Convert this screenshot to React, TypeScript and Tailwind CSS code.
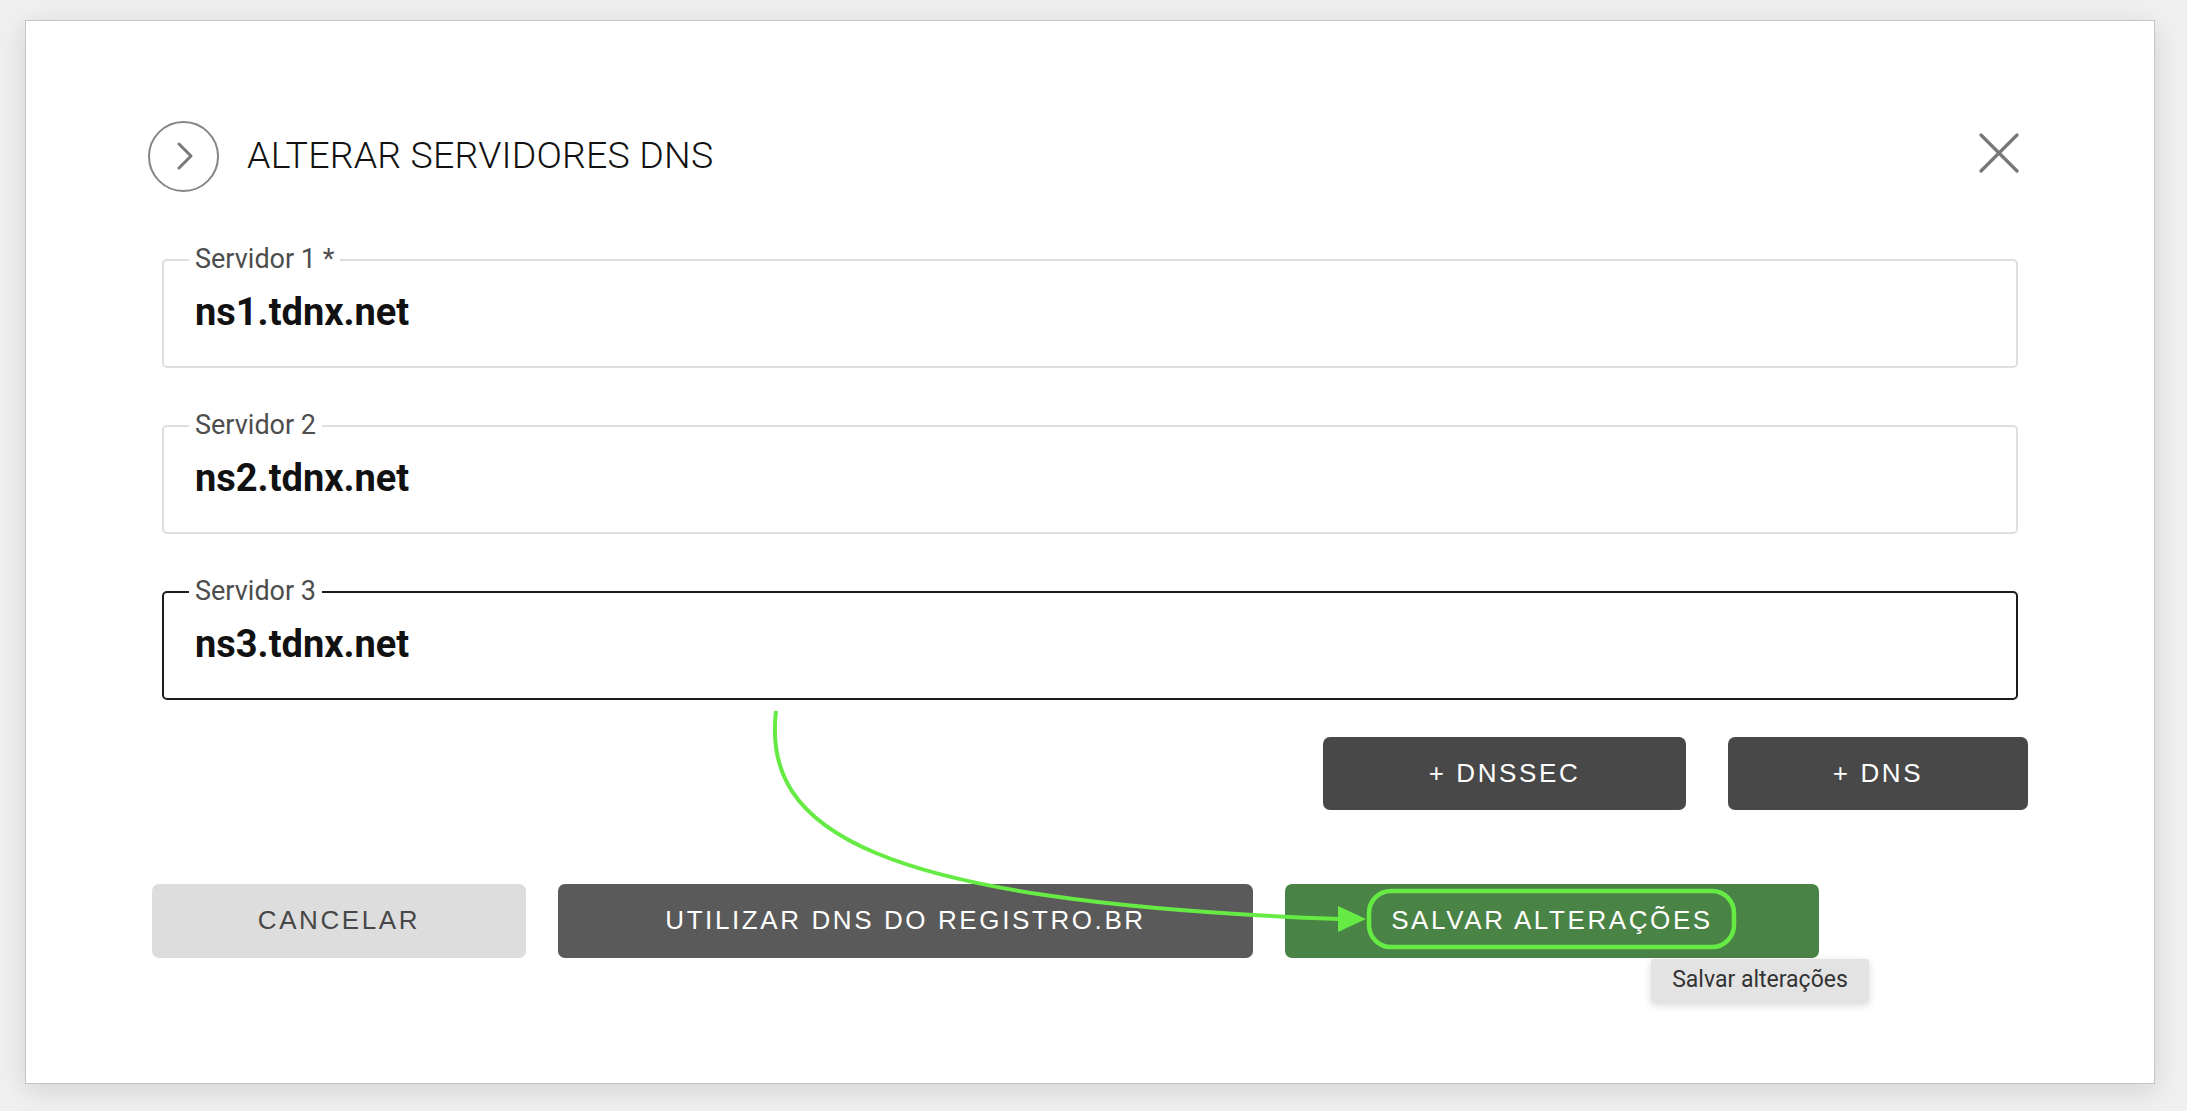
import React from "react";

const ui = { fontFamily: "Roboto, 'Noto Sans', sans-serif" };
const btn = { fontFamily: "'Liberation Sans', Arial, sans-serif" };

interface ServerFieldProps {
  label: string;
  value: string;
  focused?: boolean;
}

function ServerField({ label, value, focused = false }: ServerFieldProps) {
  return (
    <div
      className={
        "relative mx-[10px] h-[109px] rounded-[5px] bg-white flex items-center pl-[31px] " +
        (focused ? "border-2 border-[#1c1c1c]" : "border-2 border-[#dedede]")
      }
    >
      <span className="absolute -top-[16px] left-[25px] bg-white px-[6px] text-[27px] leading-[28px] text-[#4d4d4d]">
        {label}
      </span>
      <span className="text-[38px] font-bold leading-none text-[#111] pb-[4px]">{value}</span>
    </div>
  );
}

// green annotation drawn on top of the screenshot
function Annotation() {
  const green = "#66eb44";
  return (
    <svg className="pointer-events-none absolute left-0 top-0" width="2187" height="1111" viewBox="0 0 2187 1111">
      <path d="M 776 711 C 762 830, 870 902, 1340 919" fill="none" stroke={green} strokeWidth="4" />
      <polygon points="1338,906 1366,919 1338,932" fill={green} />
      <rect x="1369" y="891" width="365" height="56" rx="22" fill="none" stroke={green} strokeWidth="4.5" />
    </svg>
  );
}

export default function App() {
  return (
    <div className="relative w-[2187px] h-[1111px] overflow-hidden bg-[#f0f0f0] pt-[20px]" style={ui}>
      <div className="ml-[25px] w-[2130px] h-[1064px] bg-white border border-[#c6c6c6] shadow-[0_6px_26px_rgba(0,0,0,0.13)] px-[126px] pt-[99px]">
        {/* header */}
        <div className="flex items-center justify-between h-[72px]">
          <div className="flex items-center gap-[28px] -ml-[4px]">
            <div className="w-[71px] h-[71px] rounded-full border-2 border-[#858585] flex items-center justify-center">
              <svg width="18" height="30" viewBox="0 0 18 30" className="ml-[2px]">
                <polyline points="3,3 15,15 3,27" fill="none" stroke="#787878" strokeWidth="3" strokeLinecap="round" strokeLinejoin="round" />
              </svg>
            </div>
            <h1 className="text-[37.5px] font-light text-[#111] leading-none tracking-[0.005em]">
              ALTERAR SERVIDORES DNS
            </h1>
          </div>
          <button className="mr-[9px] -mt-[6px] w-[40px] h-[40px] flex items-center justify-center">
            <svg width="40" height="40" viewBox="0 0 40 40">
              <path d="M 2 2 L 38 38 M 38 2 L 2 38" stroke="#777" strokeWidth="3.2" strokeLinecap="round" />
            </svg>
          </button>
        </div>

        {/* fields */}
        <div className="mt-[67px] flex flex-col gap-[57px]">
          <ServerField label="Servidor 1 *" value="ns1.tdnx.net" />
          <ServerField label="Servidor 2" value="ns2.tdnx.net" />
          <ServerField label="Servidor 3" value="ns3.tdnx.net" focused />
        </div>

        {/* add buttons */}
        <div className="mt-[37px] flex justify-end gap-[42px]" style={btn}>
          <button className="w-[363px] h-[73px] rounded-[7px] bg-[#484848] text-white text-[26px] tracking-[0.1em]">
            + DNSSEC
          </button>
          <button className="w-[300px] h-[73px] rounded-[7px] bg-[#484848] text-white text-[26px] tracking-[0.1em]">
            + DNS
          </button>
        </div>

        {/* actions */}
        <div className="mt-[74px] flex gap-[32px]" style={btn}>
          <button className="w-[374px] h-[74px] rounded-[7px] bg-[#dddddd] text-[#474747] text-[26px] tracking-[0.1em] pb-[2px]">
            CANCELAR
          </button>
          <button className="w-[695px] h-[74px] rounded-[7px] bg-[#5a5a5a] text-white text-[26px] tracking-[0.1em] pb-[2px]">
            UTILIZAR DNS DO REGISTRO.BR
          </button>
          <div className="relative">
            <button className="w-[534px] h-[74px] rounded-[7px] bg-[#4a8346] text-white text-[26px] tracking-[0.1em] pb-[2px]">
              SALVAR ALTERAÇÕES
            </button>
            <div
              className="absolute left-[366px] top-[75px] w-[218px] h-[43px] rounded-[3px] bg-[#e3e3e3] shadow-[0_3px_8px_rgba(0,0,0,0.16)] flex items-center justify-center text-[23px] text-[#333]"
              style={ui}
            >
              Salvar alterações
            </div>
          </div>
        </div>
      </div>
      <Annotation />
    </div>
  );
}
